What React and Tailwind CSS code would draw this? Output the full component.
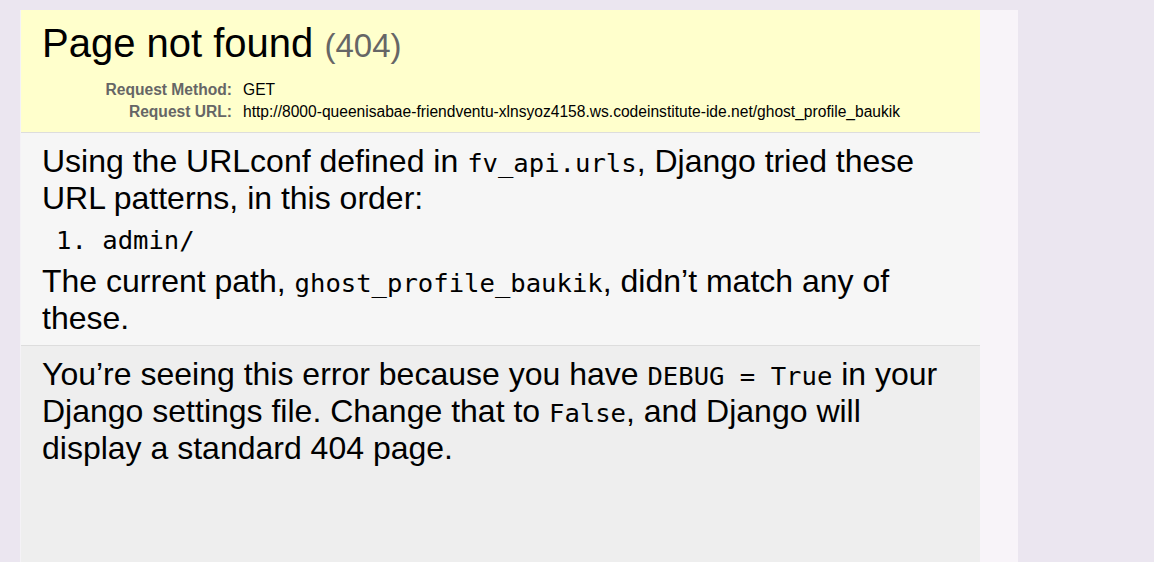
import React from 'react';

const sans = "font-['Liberation_Sans',Arial,Helvetica,sans-serif]";
const mono = "font-['DejaVu_Sans_Mono',Menlo,monospace]";

const Code = ({ children }) => (
  <code className={`${mono} text-[25.6px] leading-none`}>{children}</code>
);

const App = () => {
  const requestInfo = [
    { label: 'Request Method:', value: 'GET' },
    {
      label: 'Request URL:',
      value:
        'http://8000-queenisabae-friendventu-xlnsyoz4158.ws.codeinstitute-ide.net/ghost_profile_baukik',
    },
  ];

  return (
    <div className={`${sans} flex h-[562px] w-full overflow-hidden bg-[#ebe6f0] pt-[10px] pl-[20px] text-black`}>
      <div className="flex h-[552px] w-[960px] flex-col border-l border-[#f4f2f6]">
        {/* summary */}
        <div className="border-b border-[#ddd] bg-[#ffffcc] px-[21px] pt-[10px] pb-[9px]">
          <h1 className="mb-[10px] text-[40px] font-normal leading-[46px]">
            Page not found <span className="text-[33px] text-[#666]">(404)</span>
          </h1>
          <div className="text-[15.6px] leading-[18px]">
            {requestInfo.map((row) => (
              <div key={row.label} className="flex py-[2px]">
                <div className="w-[198px] shrink-0 pr-[8px] text-right font-bold text-[#666]">
                  {row.label}
                </div>
                <div className="pl-[3px] whitespace-nowrap">{row.value}</div>
              </div>
            ))}
          </div>
        </div>

        {/* info */}
        <div className="border-b border-[#ddd] bg-[#f6f6f6] px-[21px] pt-[10px] pb-[9px] text-[32px] leading-[37px]">
          <p>
            Using the URLconf defined in <Code>fv_api.urls</Code>, Django tried these URL
            patterns, in this order:
          </p>
          <div className={`${mono} mt-[8px] mb-[8px] pl-[14px] text-[25.6px] leading-[30px]`}>
            1. admin/
          </div>
          <p className="leading-[36.5px]">
            The current path, <Code>ghost_profile_baukik</Code>, didn’t match any of these.
          </p>
        </div>

        {/* explanation */}
        <div className="flex-1 bg-[#eeeeee] px-[21px] pt-[10px] text-[32px] leading-[37px]">
          <p>
            You’re seeing this error because you have <Code>DEBUG = True</Code> in your Django
            settings file. Change that to <Code>False</Code>, and Django will display a standard
            404 page.
          </p>
        </div>
      </div>
      <div className="h-[552px] w-[38px] bg-[#f8f4f9]" />
    </div>
  );
};

export default App;
